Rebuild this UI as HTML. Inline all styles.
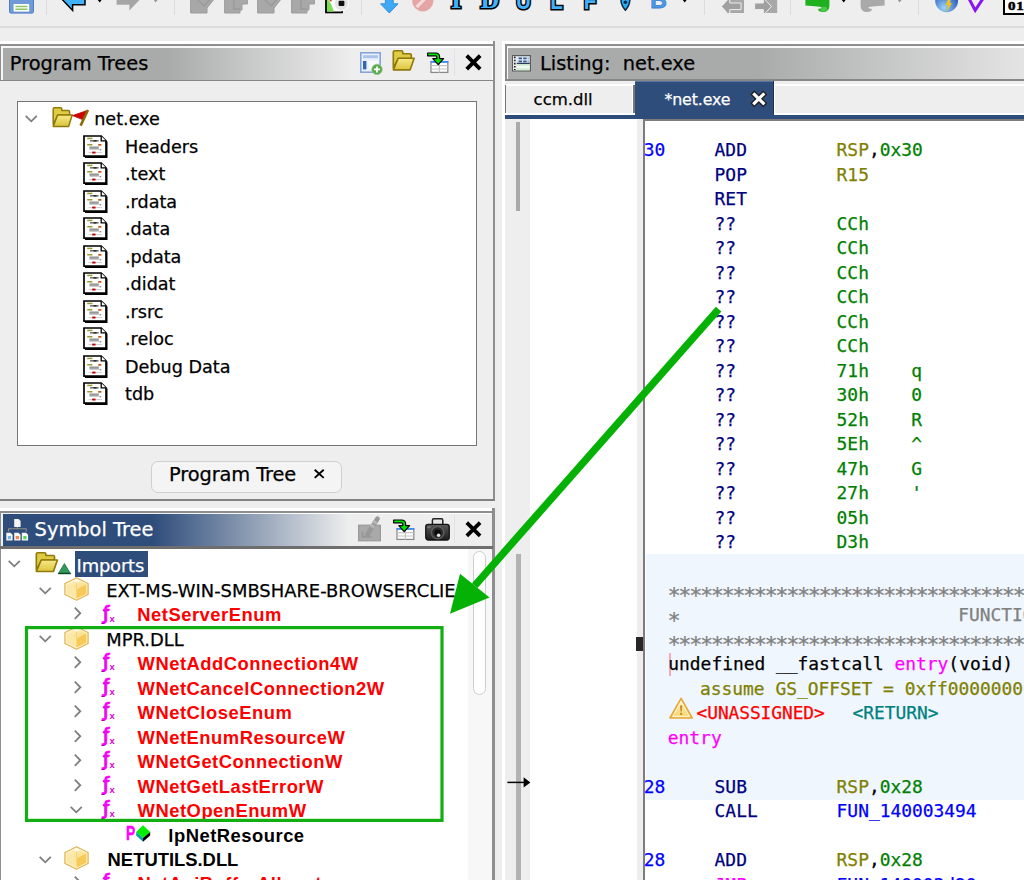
<!DOCTYPE html>
<html><head><meta charset="utf-8"><title>Ghidra</title>
<style>
html,body{margin:0;padding:0}
body{width:1024px;height:880px;overflow:hidden;background:#eeeeee;position:relative;opacity:.9999;font-family:"DejaVu Sans","Liberation Sans",sans-serif;color:#000}
.a{position:absolute}
.ui{font-family:"DejaVu Sans","Liberation Sans",sans-serif;white-space:pre;-webkit-text-stroke:.25px currentColor}
.b{font-family:"Liberation Sans","DejaVu Sans",sans-serif;font-weight:bold;white-space:pre}
.mono{font-family:"DejaVu Sans Mono","Liberation Mono",monospace;white-space:pre;-webkit-text-stroke:.25px}
svg{position:absolute;overflow:visible}
.t1{font-size:19.4px;line-height:34px;height:34px}
.pt{-webkit-text-stroke:.25px;position:absolute;left:125px;font-size:17.6px;line-height:28px;height:28px;white-space:pre}
.st{position:absolute;font-size:17.9px;line-height:25px;height:25px;white-space:pre}
.sb{position:absolute;font-size:18.4px;line-height:25px;height:25px;letter-spacing:.5px;color:#ff0000}
.ln{position:absolute;font-size:17.9px;line-height:24px;height:24px}
.cn{color:#000080}.cr{color:#808000}.cg{color:#008000}.cb{color:#0000ff}.cm{color:#ff00ff}.cs{color:#808080}.ct{color:#008080}.cx{color:#ff0000}
.g8{background:#8c8c8c}.w{background:#fff}
</style></head>
<body>
<svg width="0" height="0" style="left:0;top:0"><defs>
<linearGradient id="gfold" x1="0" y1="0" x2="0" y2="1"><stop offset="0" stop-color="#f7ea8a"/><stop offset="1" stop-color="#dcc53c"/></linearGradient>
<linearGradient id="gpk1" x1="0" y1="0" x2="1" y2="1"><stop offset="0" stop-color="#fff6cf"/><stop offset="1" stop-color="#f8d878"/></linearGradient>
<linearGradient id="gpk2" x1="0" y1="0" x2="0" y2="1"><stop offset="0" stop-color="#fbe59a"/><stop offset="1" stop-color="#f3c24e"/></linearGradient>
<linearGradient id="ggray" x1="0" y1="0" x2="0" y2="1"><stop offset="0" stop-color="#8a8a8a"/><stop offset="1" stop-color="#b8b8b8"/></linearGradient>
<linearGradient id="gcam" x1="0" y1="0" x2="0" y2="1"><stop offset="0" stop-color="#5a5a5a"/><stop offset="1" stop-color="#1c1c1c"/></linearGradient>
<linearGradient id="gwarn" x1="0" y1="0" x2="0" y2="1"><stop offset="0" stop-color="#fdf3c4"/><stop offset="1" stop-color="#f6d36a"/></linearGradient>
</defs></svg>
<div class="a" style="left:0;top:0;width:1024px;height:25px;overflow:hidden">
<div class="a" style="left:46px;top:0;width:1px;height:14.5px;background:#dcdcdc"></div><div class="a" style="left:174px;top:0;width:1px;height:14.5px;background:#dcdcdc"></div><div class="a" style="left:361px;top:0;width:1px;height:14.5px;background:#dcdcdc"></div><div class="a" style="left:704px;top:0;width:1px;height:14.5px;background:#dcdcdc"></div><div class="a" style="left:790px;top:0;width:1px;height:14.5px;background:#dcdcdc"></div><div class="a" style="left:918px;top:0;width:1px;height:14.5px;background:#dcdcdc"></div><svg style="left:9px;top:-11px" width="25" height="25"><rect x="0.5" y="0.5" width="24" height="23.6" rx="1.5" fill="#6e9ad8" stroke="#4f7cc4"/><rect x="4.6" y="15" width="15.6" height="7.6" fill="#fff"/><path d="M6.4,17.6 H18.4 M6.4,20.2 H18.4" stroke="#8cc860" stroke-width="1.5"/></svg><svg style="left:61px;top:-12px" width="25" height="23"><path d="M24,1 L24,16.8 L11.6,16.8 L11.6,22.4 L0.8,11 Z" fill="#3fb2fb" stroke="#000" stroke-width="1.5" stroke-linejoin="miter"/></svg><svg style="left:96.6px;top:-2.6px" width="6" height="6"><path d="M0,2 L5.4,2 L2.7,5.4 Z" fill="#000"/></svg><svg style="left:116px;top:-12px" width="25" height="23"><path d="M0.6,1 L0.6,16.8 L13.4,16.8 L13.4,22.4 L24.4,11 Z" fill="#a6a6a6"/></svg><svg style="left:153px;top:-2.6px" width="6" height="6"><path d="M0,2 L5.4,2 L2.7,5.4 Z" fill="#9a9a9a"/></svg><svg style="left:190.3px;top:-10px" width="24" height="24"><path d="M0.6,0 H23.4 V10 L17,18 V23 H0.6 Z" fill="#a8a8a8" stroke="#9c9c9c"/><path d="M6,8 L14,16 L23,6" fill="none" stroke="#9a9a9a" stroke-width="1.4"/></svg><svg style="left:223.6px;top:-10px" width="24" height="24"><path d="M0.6,0 H23.4 V14 H18 V20 H16 V23 H0.6 Z" fill="#a8a8a8" stroke="#9c9c9c"/><path d="M10,8 V19 H16" fill="none" stroke="#9a9a9a" stroke-width="1.4"/></svg><svg style="left:257px;top:-10px" width="24" height="24"><path d="M0.6,0 H23.4 V10 L17,18 V23 H0.6 Z" fill="#a8a8a8" stroke="#9c9c9c"/><path d="M6,8 L14,16 L23,6" fill="none" stroke="#9a9a9a" stroke-width="1.4"/></svg><svg style="left:290.8px;top:-10px" width="24" height="24"><path d="M0.6,0 H23.4 V14 H18 V20 H16 V23 H0.6 Z" fill="#a8a8a8" stroke="#9c9c9c"/><path d="M10,8 V19 H16" fill="none" stroke="#9a9a9a" stroke-width="1.4"/></svg><svg style="left:324.7px;top:-10px" width="24" height="24"><rect x="1" y="0" width="16" height="22.4" fill="#fff" stroke="#000" stroke-width="1.8"/><path d="M2,21.4 L2,8 L6,14 L9,21.4 Z" fill="#78e050"/><rect x="4.6" y="9" width="2" height="2.4" fill="#c04010"/><circle cx="16.4" cy="13.4" r="7.2" fill="#e4e4e4" stroke="#f8f8f8" stroke-width="1.4"/><rect x="13.6" y="10.8" width="5.8" height="5.2" rx="1" fill="#111"/></svg><svg style="left:379.5px;top:-10px" width="19" height="24"><path d="M5.4,0 H13.2 V13.8 H18 L9.3,23 L0.6,13.8 H5.4 Z" fill="#3fa9f5" stroke="#2d8fde" stroke-width="1"/></svg><svg style="left:411.8px;top:-10px" width="22" height="22"><circle cx="10.8" cy="10.8" r="10.6" fill="#e6a5a5"/><path d="M4.6,17 L17,4.6" stroke="#f4dada" stroke-width="3.2"/></svg><div class="a" style="left:446px;top:-14.8px;width:20px;text-align:center;font-family:'Liberation Serif',serif;font-weight:bold;font-size:26px;line-height:30px;color:#3fb2fb;-webkit-text-stroke:3.2px #000;paint-order:stroke fill">I</div><div class="a" style="left:478px;top:-14.8px;width:24px;text-align:center;font-family:'Liberation Serif',serif;font-weight:bold;font-size:26px;line-height:30px;color:#3fb2fb;-webkit-text-stroke:3.2px #000;paint-order:stroke fill">D</div><div class="a" style="left:512px;top:-13.9px;width:23px;text-align:center;font-family:'Liberation Sans',sans-serif;font-weight:bold;font-size:24px;line-height:30px;color:#3fb2fb;-webkit-text-stroke:3.2px #000;paint-order:stroke fill;transform:scaleX(.86)">U</div><div class="a" style="left:546px;top:-13.9px;width:21px;text-align:center;font-family:'Liberation Sans',sans-serif;font-weight:bold;font-size:24px;line-height:30px;color:#3fb2fb;-webkit-text-stroke:3.2px #000;paint-order:stroke fill;transform:scaleX(.86)">L</div><div class="a" style="left:580px;top:-13.9px;width:20px;text-align:center;font-family:'Liberation Sans',sans-serif;font-weight:bold;font-size:24px;line-height:30px;color:#3fb2fb;-webkit-text-stroke:3.2px #000;paint-order:stroke fill;transform:scaleX(.86)">F</div><svg style="left:619.6px;top:0px" width="11" height="12"><path d="M0.9,-2 Q0.6,5 5.4,10.2 Q10.2,5 9.9,-2 Z" fill="#28aef4" stroke="#0a2a48" stroke-width="1.5"/><circle cx="5.4" cy="2.2" r="1.8" fill="#0a2a48"/></svg><div class="a" style="left:648px;top:-15.5px;width:21px;text-align:center;font-family:'Liberation Sans',sans-serif;font-weight:bold;font-size:23px;line-height:30px;color:#4a9ae8;-webkit-text-stroke:.8px #3a80d0">B</div><svg style="left:681.6px;top:-2.6px" width="6" height="6"><path d="M0,2 L5.4,2 L2.7,5.4 Z" fill="#000"/></svg><svg style="left:720.7px;top:-10px" width="24" height="24"><rect x="9" y="0" width="14" height="23" fill="#a8a8a8"/><path d="M0.4,16.4 L8.8,7.4 L8.8,13 L20,13 L20,19.6 L8.8,19.6 L8.8,23.4 L6.6,23.4 Z" fill="#a0a0a0" stroke="#eee" stroke-width="1"/></svg><svg style="left:754.4px;top:-10px" width="24" height="24"><rect x="9.4" y="0" width="13.8" height="23" fill="#a8a8a8"/><path d="M0.6,13 L9.4,13 L9.4,8 L17.4,16.4 L11,23.4 L9.4,23.4 L9.4,19.6 L0.6,19.6 Z" fill="#a0a0a0" stroke="#eee" stroke-width="1"/></svg><svg style="left:805px;top:0px" width="25" height="13"><path d="M0.4,0 H24.4 V5.4 Q24.6,12.4 17,12 Q12,11.4 13.6,8.6 Q16.4,9.4 16.6,7 L9.6,6.2 L0.4,5.4 Z" fill="#1fb01f"/><path d="M17,7 Q23,6 22,10 Q19,12.4 15,11" fill="#66dd66" opacity=".6"/></svg><svg style="left:840.6px;top:-2.6px" width="6" height="6"><path d="M0,2 L5.4,2 L2.7,5.4 Z" fill="#000"/></svg><svg style="left:860px;top:0px" width="25" height="13"><path d="M24.6,0 H0.6 V5.4 Q0.4,12.4 8,12 Q13,11.4 11.4,8.6 Q8.6,9.4 8.4,7 L15.4,6.2 L24.6,5.4 Z" fill="#a9a9a9"/></svg><svg style="left:897px;top:-2.6px" width="6" height="6"><path d="M0,2 L5.4,2 L2.7,5.4 Z" fill="#9a9a9a"/></svg><svg style="left:934.8px;top:-11px" width="24" height="24"><defs><radialGradient id="gglobe" cx=".4" cy=".8" r=".7"><stop offset="0" stop-color="#9fd4f8"/><stop offset="1" stop-color="#1f55b8"/></radialGradient></defs><circle cx="11.6" cy="11.8" r="11.4" fill="url(#gglobe)"/><path d="M14,8 L16.6,8 L14.8,14 L17,14 L11.6,23 L12.8,16 L10.6,16 Z" fill="#f2c21c"/></svg><svg style="left:968.3px;top:-10px" width="20" height="22"><path d="M1,8.6 L7.2,20.4 L18,4" fill="none" stroke="#8a14f0" stroke-width="3"/></svg><div class="a" style="left:1003px;top:-8px;width:30px;height:19px;background:#fff;border:2px solid #000"></div><div class="a" style="left:1007.6px;top:-0.4px;font-family:'Liberation Serif',serif;font-weight:bold;font-size:12px;line-height:12px;letter-spacing:.6px;color:#000;-webkit-text-stroke:.5px #000;transform:scaleX(1.25);transform-origin:0 0">01</div>
</div>
<div class="a" style="left:0;top:26px;width:1024px;height:1.5px;background:#dcdcdc"></div>
<div class="a w" style="left:0;top:41px;width:493px;height:3px"></div>
<div class="a" style="left:0;top:44px;width:495px;height:2px;background:#8e8e8e"></div>
<div class="a" style="left:493px;top:41px;width:2px;height:460px;background:#8e8e8e"></div>
<div class="a w" style="left:491.5px;top:46px;width:1.5px;height:34px"></div>
<div class="a" style="left:0;top:498.8px;width:495px;height:2px;background:#808080"></div>
<div class="a" style="left:0;top:46px;width:1.3px;height:34px;background:#8e8e8e"></div>
<div class="a" style="left:1.3px;top:46px;width:490.2px;height:34px;background:linear-gradient(90deg,#a9abaa 0,#a9abaa 34%,#eeeeee 72%)"></div>
<div class="a w" style="left:1.3px;top:46px;width:490.2px;height:1.7px;opacity:.9"></div>
<div class="a w" style="left:1.3px;top:46px;width:1.7px;height:34px;opacity:.9"></div>
<div class="a" style="left:0;top:79.6px;width:493px;height:1.4px;background:#868686"></div>
<div class="a ui t1" style="left:9.8px;top:46.5px">Program Trees</div>
<svg style="left:360px;top:52px" width="22.5" height="22.75" viewBox="0 0 22.5 22.75"> <rect x="0.8" y="0.8" width="19.4" height="19.4" fill="#eaf1fb" stroke="#7f9fd6" stroke-width="1.5"/>
 <rect x="3" y="3.2" width="15" height="3" fill="#a9c3ea"/>
 <rect x="3" y="9" width="3.4" height="8.4" fill="#3566b0"/>
 <rect x="8.4" y="9" width="9.6" height="8.4" fill="#f8fafe"/>
 <circle cx="17" cy="17.4" r="5.2" fill="#5aa84c" stroke="#8cc880" stroke-width="0.8"/>
 <path d="M14,17.4 H20 M17,14.4 V20.4" stroke="#fff" stroke-width="1.8"/></svg>

<svg style="left:392px;top:50px" width="23" height="21" viewBox="0 0 21 20.5" preserveAspectRatio="none"> <path d="M1.2,17.5 L1.2,2 Q1.2,0.8 2.4,0.8 L8.6,0.8 Q9.8,0.8 9.8,2 L9.8,3.6 L16.4,3.6 Q17.6,3.6 17.6,4.8 L17.6,8.2 L6,8.2 Z" fill="#e0cb45" stroke="#8f7a0a" stroke-width="1.5" stroke-linejoin="round"/>
 <path d="M5.6,8 L20.2,8 L16.6,19.4 L1.2,19.4 Z" fill="url(#gfold)" stroke="#8f7a0a" stroke-width="1.5" stroke-linejoin="round"/></svg>

<svg style="left:427px;top:52.3px" width="21.5" height="21" viewBox="0 0 21.5 21"> <rect x="4" y="10" width="16.8" height="10.4" fill="#fff" stroke="#8a8a8a" stroke-width="1.3"/>
 <path d="M4,13.6 H20.8 M4,17 H20.8 M12.4,12 V20.4" stroke="#c4c4c4" stroke-width="1.2" fill="none"/>
 <rect x="3.4" y="9" width="18" height="1.7" fill="#3a8cff"/>
 <path d="M0.6,1 L8.6,1 Q12.6,1 12.6,5 L12.6,6.6 L16.6,6.6 L11.2,12.6 L5.8,6.6 L9.8,6.6 L9.8,5 Q9.8,3.8 8.6,3.8 L0.6,3.8 Z" fill="#00e400" stroke="#000" stroke-width="1.2" stroke-linejoin="round"/></svg>

<div class="a" style="left:454.3px;top:49px;width:1px;height:27px;background:#e2e2e2"></div>
<svg style="left:465.4px;top:53.8px" width="16.9" height="16.8" viewBox="0 0 16 16"> <path d="M1.6,1.6 L14.4,14.4 M14.4,1.6 L1.6,14.4" stroke="#000" stroke-width="3.6" stroke-linecap="butt"/></svg>

<div class="a" style="left:17px;top:101px;width:457.5px;height:343px;background:#fff;border:1.4px solid #767676"></div>
<svg style="left:25px;top:115px" width="12.5" height="7.5"><path d="M0.7,0.8 L6.25,6.3 L11.8,0.8" fill="none" stroke="#7f7f7f" stroke-width="1.8"/></svg>

<svg style="left:52px;top:107px" width="21" height="20.5" viewBox="0 0 21 20.5" preserveAspectRatio="none"> <path d="M1.2,17.5 L1.2,2 Q1.2,0.8 2.4,0.8 L8.6,0.8 Q9.8,0.8 9.8,2 L9.8,3.6 L16.4,3.6 Q17.6,3.6 17.6,4.8 L17.6,8.2 L6,8.2 Z" fill="#e0cb45" stroke="#8f7a0a" stroke-width="1.5" stroke-linejoin="round"/>
 <path d="M5.6,8 L20.2,8 L16.6,19.4 L1.2,19.4 Z" fill="url(#gfold)" stroke="#8f7a0a" stroke-width="1.5" stroke-linejoin="round"/></svg>

<svg style="left:70px;top:108px" width="20" height="20"><path d="M17.4,2.4 L2.6,7.6 L12.6,11.6 Z" fill="#d40000" stroke="#b00000" stroke-width=".8" stroke-linejoin="round"/><path d="M18,2 L10.6,17.6" stroke="#8a6a08" stroke-width="2.6"/></svg>
<div class="pt" style="left:94.2px;top:105.20px">net.exe</div>
<svg style="left:82.7px;top:134.7px" width="24.5" height="23" viewBox="0 0 24.5 23"> <path d="M2,22.2 L23.8,22.2 L23.8,6.5" fill="none" stroke="#000" stroke-width="1.4"/>
 <path d="M1,1 L18.2,1 L23,5.8 L23,21.2 L1,21.2 Z" fill="#fff" stroke="#000" stroke-width="1.7" stroke-linejoin="miter"/>
 <path d="M18.2,1 L18.2,5.8 L23,5.8" fill="#fff" stroke="#000" stroke-width="1.3"/>
 <rect x="4.2" y="2.7" width="5.2" height="1.5" fill="#9a9a3a"/>
 <rect x="7" y="5" width="8.6" height="1.6" fill="#777"/>
 <rect x="10.5" y="5" width="3" height="1.6" fill="#333"/>
 <rect x="4.2" y="9" width="5.2" height="1.5" fill="#9a9a3a"/>
 <rect x="15.2" y="9" width="3.2" height="1.7" fill="#c05a10"/>
 <rect x="6.4" y="11.5" width="9.4" height="3.2" fill="url(#ggray)"/>
 <rect x="16.6" y="14" width="1.6" height="1.4" fill="#888"/>
 <rect x="5.6" y="17.1" width="13.4" height="1" fill="#ccc"/>
 <rect x="9.2" y="16.6" width="3.3" height="1.9" fill="#c40000"/></svg>

<div class="pt" style="top:132.70px">Headers</div>
<svg style="left:82.7px;top:162.2px" width="24.5" height="23" viewBox="0 0 24.5 23"> <path d="M2,22.2 L23.8,22.2 L23.8,6.5" fill="none" stroke="#000" stroke-width="1.4"/>
 <path d="M1,1 L18.2,1 L23,5.8 L23,21.2 L1,21.2 Z" fill="#fff" stroke="#000" stroke-width="1.7" stroke-linejoin="miter"/>
 <path d="M18.2,1 L18.2,5.8 L23,5.8" fill="#fff" stroke="#000" stroke-width="1.3"/>
 <rect x="4.2" y="2.7" width="5.2" height="1.5" fill="#9a9a3a"/>
 <rect x="7" y="5" width="8.6" height="1.6" fill="#777"/>
 <rect x="10.5" y="5" width="3" height="1.6" fill="#333"/>
 <rect x="4.2" y="9" width="5.2" height="1.5" fill="#9a9a3a"/>
 <rect x="15.2" y="9" width="3.2" height="1.7" fill="#c05a10"/>
 <rect x="6.4" y="11.5" width="9.4" height="3.2" fill="url(#ggray)"/>
 <rect x="16.6" y="14" width="1.6" height="1.4" fill="#888"/>
 <rect x="5.6" y="17.1" width="13.4" height="1" fill="#ccc"/>
 <rect x="9.2" y="16.6" width="3.3" height="1.9" fill="#c40000"/></svg>

<div class="pt" style="top:160.20px">.text</div>
<svg style="left:82.7px;top:189.7px" width="24.5" height="23" viewBox="0 0 24.5 23"> <path d="M2,22.2 L23.8,22.2 L23.8,6.5" fill="none" stroke="#000" stroke-width="1.4"/>
 <path d="M1,1 L18.2,1 L23,5.8 L23,21.2 L1,21.2 Z" fill="#fff" stroke="#000" stroke-width="1.7" stroke-linejoin="miter"/>
 <path d="M18.2,1 L18.2,5.8 L23,5.8" fill="#fff" stroke="#000" stroke-width="1.3"/>
 <rect x="4.2" y="2.7" width="5.2" height="1.5" fill="#9a9a3a"/>
 <rect x="7" y="5" width="8.6" height="1.6" fill="#777"/>
 <rect x="10.5" y="5" width="3" height="1.6" fill="#333"/>
 <rect x="4.2" y="9" width="5.2" height="1.5" fill="#9a9a3a"/>
 <rect x="15.2" y="9" width="3.2" height="1.7" fill="#c05a10"/>
 <rect x="6.4" y="11.5" width="9.4" height="3.2" fill="url(#ggray)"/>
 <rect x="16.6" y="14" width="1.6" height="1.4" fill="#888"/>
 <rect x="5.6" y="17.1" width="13.4" height="1" fill="#ccc"/>
 <rect x="9.2" y="16.6" width="3.3" height="1.9" fill="#c40000"/></svg>

<div class="pt" style="top:187.70px">.rdata</div>
<svg style="left:82.7px;top:217.2px" width="24.5" height="23" viewBox="0 0 24.5 23"> <path d="M2,22.2 L23.8,22.2 L23.8,6.5" fill="none" stroke="#000" stroke-width="1.4"/>
 <path d="M1,1 L18.2,1 L23,5.8 L23,21.2 L1,21.2 Z" fill="#fff" stroke="#000" stroke-width="1.7" stroke-linejoin="miter"/>
 <path d="M18.2,1 L18.2,5.8 L23,5.8" fill="#fff" stroke="#000" stroke-width="1.3"/>
 <rect x="4.2" y="2.7" width="5.2" height="1.5" fill="#9a9a3a"/>
 <rect x="7" y="5" width="8.6" height="1.6" fill="#777"/>
 <rect x="10.5" y="5" width="3" height="1.6" fill="#333"/>
 <rect x="4.2" y="9" width="5.2" height="1.5" fill="#9a9a3a"/>
 <rect x="15.2" y="9" width="3.2" height="1.7" fill="#c05a10"/>
 <rect x="6.4" y="11.5" width="9.4" height="3.2" fill="url(#ggray)"/>
 <rect x="16.6" y="14" width="1.6" height="1.4" fill="#888"/>
 <rect x="5.6" y="17.1" width="13.4" height="1" fill="#ccc"/>
 <rect x="9.2" y="16.6" width="3.3" height="1.9" fill="#c40000"/></svg>

<div class="pt" style="top:215.20px">.data</div>
<svg style="left:82.7px;top:244.7px" width="24.5" height="23" viewBox="0 0 24.5 23"> <path d="M2,22.2 L23.8,22.2 L23.8,6.5" fill="none" stroke="#000" stroke-width="1.4"/>
 <path d="M1,1 L18.2,1 L23,5.8 L23,21.2 L1,21.2 Z" fill="#fff" stroke="#000" stroke-width="1.7" stroke-linejoin="miter"/>
 <path d="M18.2,1 L18.2,5.8 L23,5.8" fill="#fff" stroke="#000" stroke-width="1.3"/>
 <rect x="4.2" y="2.7" width="5.2" height="1.5" fill="#9a9a3a"/>
 <rect x="7" y="5" width="8.6" height="1.6" fill="#777"/>
 <rect x="10.5" y="5" width="3" height="1.6" fill="#333"/>
 <rect x="4.2" y="9" width="5.2" height="1.5" fill="#9a9a3a"/>
 <rect x="15.2" y="9" width="3.2" height="1.7" fill="#c05a10"/>
 <rect x="6.4" y="11.5" width="9.4" height="3.2" fill="url(#ggray)"/>
 <rect x="16.6" y="14" width="1.6" height="1.4" fill="#888"/>
 <rect x="5.6" y="17.1" width="13.4" height="1" fill="#ccc"/>
 <rect x="9.2" y="16.6" width="3.3" height="1.9" fill="#c40000"/></svg>

<div class="pt" style="top:242.70px">.pdata</div>
<svg style="left:82.7px;top:272.2px" width="24.5" height="23" viewBox="0 0 24.5 23"> <path d="M2,22.2 L23.8,22.2 L23.8,6.5" fill="none" stroke="#000" stroke-width="1.4"/>
 <path d="M1,1 L18.2,1 L23,5.8 L23,21.2 L1,21.2 Z" fill="#fff" stroke="#000" stroke-width="1.7" stroke-linejoin="miter"/>
 <path d="M18.2,1 L18.2,5.8 L23,5.8" fill="#fff" stroke="#000" stroke-width="1.3"/>
 <rect x="4.2" y="2.7" width="5.2" height="1.5" fill="#9a9a3a"/>
 <rect x="7" y="5" width="8.6" height="1.6" fill="#777"/>
 <rect x="10.5" y="5" width="3" height="1.6" fill="#333"/>
 <rect x="4.2" y="9" width="5.2" height="1.5" fill="#9a9a3a"/>
 <rect x="15.2" y="9" width="3.2" height="1.7" fill="#c05a10"/>
 <rect x="6.4" y="11.5" width="9.4" height="3.2" fill="url(#ggray)"/>
 <rect x="16.6" y="14" width="1.6" height="1.4" fill="#888"/>
 <rect x="5.6" y="17.1" width="13.4" height="1" fill="#ccc"/>
 <rect x="9.2" y="16.6" width="3.3" height="1.9" fill="#c40000"/></svg>

<div class="pt" style="top:270.20px">.didat</div>
<svg style="left:82.7px;top:299.7px" width="24.5" height="23" viewBox="0 0 24.5 23"> <path d="M2,22.2 L23.8,22.2 L23.8,6.5" fill="none" stroke="#000" stroke-width="1.4"/>
 <path d="M1,1 L18.2,1 L23,5.8 L23,21.2 L1,21.2 Z" fill="#fff" stroke="#000" stroke-width="1.7" stroke-linejoin="miter"/>
 <path d="M18.2,1 L18.2,5.8 L23,5.8" fill="#fff" stroke="#000" stroke-width="1.3"/>
 <rect x="4.2" y="2.7" width="5.2" height="1.5" fill="#9a9a3a"/>
 <rect x="7" y="5" width="8.6" height="1.6" fill="#777"/>
 <rect x="10.5" y="5" width="3" height="1.6" fill="#333"/>
 <rect x="4.2" y="9" width="5.2" height="1.5" fill="#9a9a3a"/>
 <rect x="15.2" y="9" width="3.2" height="1.7" fill="#c05a10"/>
 <rect x="6.4" y="11.5" width="9.4" height="3.2" fill="url(#ggray)"/>
 <rect x="16.6" y="14" width="1.6" height="1.4" fill="#888"/>
 <rect x="5.6" y="17.1" width="13.4" height="1" fill="#ccc"/>
 <rect x="9.2" y="16.6" width="3.3" height="1.9" fill="#c40000"/></svg>

<div class="pt" style="top:297.70px">.rsrc</div>
<svg style="left:82.7px;top:327.2px" width="24.5" height="23" viewBox="0 0 24.5 23"> <path d="M2,22.2 L23.8,22.2 L23.8,6.5" fill="none" stroke="#000" stroke-width="1.4"/>
 <path d="M1,1 L18.2,1 L23,5.8 L23,21.2 L1,21.2 Z" fill="#fff" stroke="#000" stroke-width="1.7" stroke-linejoin="miter"/>
 <path d="M18.2,1 L18.2,5.8 L23,5.8" fill="#fff" stroke="#000" stroke-width="1.3"/>
 <rect x="4.2" y="2.7" width="5.2" height="1.5" fill="#9a9a3a"/>
 <rect x="7" y="5" width="8.6" height="1.6" fill="#777"/>
 <rect x="10.5" y="5" width="3" height="1.6" fill="#333"/>
 <rect x="4.2" y="9" width="5.2" height="1.5" fill="#9a9a3a"/>
 <rect x="15.2" y="9" width="3.2" height="1.7" fill="#c05a10"/>
 <rect x="6.4" y="11.5" width="9.4" height="3.2" fill="url(#ggray)"/>
 <rect x="16.6" y="14" width="1.6" height="1.4" fill="#888"/>
 <rect x="5.6" y="17.1" width="13.4" height="1" fill="#ccc"/>
 <rect x="9.2" y="16.6" width="3.3" height="1.9" fill="#c40000"/></svg>

<div class="pt" style="top:325.20px">.reloc</div>
<svg style="left:82.7px;top:354.7px" width="24.5" height="23" viewBox="0 0 24.5 23"> <path d="M2,22.2 L23.8,22.2 L23.8,6.5" fill="none" stroke="#000" stroke-width="1.4"/>
 <path d="M1,1 L18.2,1 L23,5.8 L23,21.2 L1,21.2 Z" fill="#fff" stroke="#000" stroke-width="1.7" stroke-linejoin="miter"/>
 <path d="M18.2,1 L18.2,5.8 L23,5.8" fill="#fff" stroke="#000" stroke-width="1.3"/>
 <rect x="4.2" y="2.7" width="5.2" height="1.5" fill="#9a9a3a"/>
 <rect x="7" y="5" width="8.6" height="1.6" fill="#777"/>
 <rect x="10.5" y="5" width="3" height="1.6" fill="#333"/>
 <rect x="4.2" y="9" width="5.2" height="1.5" fill="#9a9a3a"/>
 <rect x="15.2" y="9" width="3.2" height="1.7" fill="#c05a10"/>
 <rect x="6.4" y="11.5" width="9.4" height="3.2" fill="url(#ggray)"/>
 <rect x="16.6" y="14" width="1.6" height="1.4" fill="#888"/>
 <rect x="5.6" y="17.1" width="13.4" height="1" fill="#ccc"/>
 <rect x="9.2" y="16.6" width="3.3" height="1.9" fill="#c40000"/></svg>

<div class="pt" style="top:352.70px">Debug Data</div>
<svg style="left:82.7px;top:382.2px" width="24.5" height="23" viewBox="0 0 24.5 23"> <path d="M2,22.2 L23.8,22.2 L23.8,6.5" fill="none" stroke="#000" stroke-width="1.4"/>
 <path d="M1,1 L18.2,1 L23,5.8 L23,21.2 L1,21.2 Z" fill="#fff" stroke="#000" stroke-width="1.7" stroke-linejoin="miter"/>
 <path d="M18.2,1 L18.2,5.8 L23,5.8" fill="#fff" stroke="#000" stroke-width="1.3"/>
 <rect x="4.2" y="2.7" width="5.2" height="1.5" fill="#9a9a3a"/>
 <rect x="7" y="5" width="8.6" height="1.6" fill="#777"/>
 <rect x="10.5" y="5" width="3" height="1.6" fill="#333"/>
 <rect x="4.2" y="9" width="5.2" height="1.5" fill="#9a9a3a"/>
 <rect x="15.2" y="9" width="3.2" height="1.7" fill="#c05a10"/>
 <rect x="6.4" y="11.5" width="9.4" height="3.2" fill="url(#ggray)"/>
 <rect x="16.6" y="14" width="1.6" height="1.4" fill="#888"/>
 <rect x="5.6" y="17.1" width="13.4" height="1" fill="#ccc"/>
 <rect x="9.2" y="16.6" width="3.3" height="1.9" fill="#c40000"/></svg>

<div class="pt" style="top:380.20px">tdb</div>
<div class="a" style="left:151px;top:460.5px;width:189px;height:30.5px;border:1px solid #cfcfcf;border-radius:7px;background:#f4f4f4"></div>
<div class="a ui" style="left:169px;top:458.3px;font-size:19.4px;letter-spacing:-.1px;line-height:34px">Program Tree</div>
<svg style="left:313.7px;top:469.4px" width="10.4" height="9.6"><path d="M0.7,0.7 L9.7,8.9 M9.7,0.7 L0.7,8.9" stroke="#000" stroke-width="1.9"/></svg>
<div class="a w" style="left:0;top:508px;width:493px;height:3.2px"></div>
<div class="a w" style="left:1.3px;top:548px;width:490.7px;height:332px"></div>
<div class="a" style="left:467.5px;top:549px;width:24px;height:331px;background:#f7f7f7"></div>
<div class="a" style="left:0;top:511.2px;width:495px;height:1.9px;background:#8e8e8e"></div>
<div class="a" style="left:492px;top:508px;width:2.6px;height:372px;background:#8e8e8e"></div>
<div class="a" style="left:0;top:513px;width:1.3px;height:367px;background:#8e8e8e"></div>
<div class="a" style="left:1.3px;top:513px;width:490.2px;height:33.4px;background:linear-gradient(90deg,#2e4d7b 0,#2e4d7b 31%,#eeeeee 71%)"></div>
<div class="a w" style="left:1.3px;top:513px;width:490.2px;height:1.3px;opacity:.92"></div>
<div class="a w" style="left:1.3px;top:513px;width:1.6px;height:33.4px;opacity:.92"></div>
<div class="a" style="left:0;top:546.3px;width:493px;height:2.5px;background:#6e6e6e"></div>
<svg style="left:5.6px;top:518.8px" width="22.4" height="21.4" viewBox="0 0 22.4 21.4"> <path d="M8.2,0 L12.6,0 L14.6,2 L14.6,8 L8.2,8 Z" fill="#f4f4f4"/>
 <path d="M11.4,8 V9.8 M2.6,12.4 V9.8 H20.2 V12.4" fill="none" stroke="#8f8f86" stroke-width="1.1"/>
 <path d="M0.3,13.8 L4.6,13.8 L6.6,15.8 L6.6,21.4 L0.3,21.4 Z" fill="#f6f6f6"/>
 <path d="M8.2,13.8 L12.5,13.8 L14.5,15.8 L14.5,21.4 L8.2,21.4 Z" fill="#f6f6f6"/>
 <path d="M15.8,13.8 L20.1,13.8 L22.1,15.8 L22.1,21.4 L15.8,21.4 Z" fill="#f6f6f6"/>
 <rect x="1.8" y="17" width="3.2" height="3.2" fill="#74b6f2"/>
 <rect x="9.7" y="17" width="3.2" height="3.2" fill="#f2854a"/>
 <rect x="17.3" y="17" width="3.2" height="3.2" fill="#58d458"/></svg>

<div class="a ui t1" style="left:34.6px;top:512.8px;color:#fff">Symbol Tree</div>
<svg style="left:358px;top:517px" width="23" height="24.4" viewBox="0 0 23 24.4"> <rect x="0.6" y="8.2" width="21.8" height="15.6" fill="#a9a9a9" stroke="#9a9a9a" stroke-width="1.2"/>
 <path d="M19.6,1.6 L9.4,17.6" stroke="#989898" stroke-width="4.6" stroke-linecap="round"/>
 <path d="M17.6,4 L16,6.4 M15.2,7.8 L13.6,10.2" stroke="#b8b8b8" stroke-width="4.4"/>
 <path d="M4.4,14.6 L4.4,19.6 L12,19.6 L9,17.6" stroke="#969696" stroke-width="1.6" fill="none"/></svg>

<svg style="left:393.2px;top:518.5px" width="21.5" height="21" viewBox="0 0 21.5 21"> <rect x="4" y="10" width="16.8" height="10.4" fill="#fff" stroke="#8a8a8a" stroke-width="1.3"/>
 <path d="M4,13.6 H20.8 M4,17 H20.8 M12.4,12 V20.4" stroke="#c4c4c4" stroke-width="1.2" fill="none"/>
 <rect x="3.4" y="9" width="18" height="1.7" fill="#3a8cff"/>
 <path d="M0.6,1 L8.6,1 Q12.6,1 12.6,5 L12.6,6.6 L16.6,6.6 L11.2,12.6 L5.8,6.6 L9.8,6.6 L9.8,5 Q9.8,3.8 8.6,3.8 L0.6,3.8 Z" fill="#00e400" stroke="#000" stroke-width="1.2" stroke-linejoin="round"/></svg>

<svg style="left:425.4px;top:517.5px" width="25" height="23.5" viewBox="0 0 25 23.5"> <rect x="7.4" y="0.8" width="10.4" height="7" rx="1.4" fill="#e4e4e4" stroke="#222" stroke-width="1.5"/>
 <rect x="0.8" y="6.4" width="23.4" height="15.6" rx="2.4" fill="url(#gcam)" stroke="#141414" stroke-width="1.4"/>
 <circle cx="12.6" cy="14.6" r="6.2" fill="#2a2a2a" stroke="#5c5c5c" stroke-width="1.6"/>
 <circle cx="12.6" cy="14.6" r="3.2" fill="#0a0a0a"/>
 <circle cx="13.6" cy="17.2" r="1.7" fill="#e8e8e8"/>
 <rect x="2.4" y="8.4" width="3.2" height="1.8" fill="#777"/></svg>

<div class="a" style="left:454.3px;top:515px;width:1px;height:28px;background:#e2e2e2"></div>
<svg style="left:465.4px;top:520.5px" width="16.9" height="16.6" viewBox="0 0 16 16"> <path d="M1.6,1.6 L14.4,14.4 M14.4,1.6 L1.6,14.4" stroke="#000" stroke-width="3.6" stroke-linecap="butt"/></svg>

<div class="a" style="left:472.5px;top:551px;width:11px;height:141.5px;border:1px solid #cdcdcd;border-radius:7px;background:#fff"></div>
<svg style="left:8px;top:560.4px" width="12.5" height="7.5"><path d="M0.7,0.8 L6.25,6.3 L11.8,0.8" fill="none" stroke="#7f7f7f" stroke-width="1.8"/></svg>

<svg style="left:35px;top:552.4px" width="23.3" height="20.6" viewBox="0 0 21 20.5" preserveAspectRatio="none"> <path d="M1.2,17.5 L1.2,2 Q1.2,0.8 2.4,0.8 L8.6,0.8 Q9.8,0.8 9.8,2 L9.8,3.6 L16.4,3.6 Q17.6,3.6 17.6,4.8 L17.6,8.2 L6,8.2 Z" fill="#e0cb45" stroke="#8f7a0a" stroke-width="1.5" stroke-linejoin="round"/>
 <path d="M5.6,8 L20.2,8 L16.6,19.4 L1.2,19.4 Z" fill="url(#gfold)" stroke="#8f7a0a" stroke-width="1.5" stroke-linejoin="round"/></svg>

<svg style="left:57.8px;top:562.6px" width="13" height="11.4"><path d="M6.4,0.6 L12.6,10.8 L0.3,10.8 Z" fill="#2f9a5c" stroke="#1e7040" stroke-width=".8" stroke-linejoin="round"/><path d="M0.3,10.4 H12.6" stroke="#0c4020" stroke-width="1.2"/></svg>
<div class="a" style="left:75px;top:551px;width:73px;height:26px;background:#2e4d7b"></div>
<div class="st ui" style="left:76.5px;top:552.60px;color:#fff;letter-spacing:-.15px">Imports</div>
<svg style="left:39px;top:586.5500000000001px" width="12.5" height="7.5"><path d="M0.7,0.8 L6.25,6.3 L11.8,0.8" fill="none" stroke="#7f7f7f" stroke-width="1.8"/></svg>

<svg style="left:64.2px;top:577.35px" width="25" height="24" viewBox="0 0 25 24" preserveAspectRatio="none"> <path d="M12.5,0.9 L24,6.6 L24,17.4 L12.5,23.1 L1,17.4 L1,6.6 Z" fill="#fbe7a6" stroke="#e3b960" stroke-width="1.5" stroke-linejoin="round"/>
 <path d="M12.5,12.2 L23.2,7 L23.2,17 L12.5,22.2 Z" fill="#f7c956"/>
 <path d="M12.5,2 L22.6,6.8 L12.5,11.8 L2.4,6.8 Z" fill="url(#gpk1)"/>
 <path d="M8.6,3.6 L12.5,5.6 L16.6,3.8 L12.5,2 Z" fill="#fffdf0"/>
 <path d="M12.5,5.6 L12.5,11.8" stroke="#f3d184" stroke-width="1"/>
 <path d="M12.5,2.2 L22.8,7 L22.8,16.9 L12.5,22 L2.2,16.9 L2.2,7 Z" fill="none" stroke="#fff6d8" stroke-width=".9" opacity=".9"/></svg>

<div class="st ui" style="left:106.3px;top:578.00px;">EXT-MS-WIN-SMBSHARE-BROWSERCLIE</div>
<svg style="left:73.5px;top:607.4px" width="7.5" height="12.5"><path d="M0.8,0.7 L6.3,6.25 L0.8,11.8" fill="none" stroke="#7f7f7f" stroke-width="1.8"/></svg>

<div class="a" style="left:103.2px;top:600.50px;font-family:'DejaVu Sans',sans-serif;font-weight:normal;font-size:17.8px;line-height:24px;color:#ff00ff;-webkit-text-stroke:.7px #ff00ff;text-shadow:-0.8px 0.8px 0 #8a008a">ƒ</div>
<div class="a" style="left:109.4px;top:613.50px;font-family:'Liberation Sans',sans-serif;font-weight:bold;font-size:9.5px;line-height:10px;color:#d800d8">x</div>
<div class="sb b" style="left:137.3px;top:602.45px;">NetServerEnum</div>
<svg style="left:39px;top:635.45px" width="12.5" height="7.5"><path d="M0.7,0.8 L6.25,6.3 L11.8,0.8" fill="none" stroke="#7f7f7f" stroke-width="1.8"/></svg>

<svg style="left:64.2px;top:626.25px" width="25" height="24" viewBox="0 0 25 24" preserveAspectRatio="none"> <path d="M12.5,0.9 L24,6.6 L24,17.4 L12.5,23.1 L1,17.4 L1,6.6 Z" fill="#fbe7a6" stroke="#e3b960" stroke-width="1.5" stroke-linejoin="round"/>
 <path d="M12.5,12.2 L23.2,7 L23.2,17 L12.5,22.2 Z" fill="#f7c956"/>
 <path d="M12.5,2 L22.6,6.8 L12.5,11.8 L2.4,6.8 Z" fill="url(#gpk1)"/>
 <path d="M8.6,3.6 L12.5,5.6 L16.6,3.8 L12.5,2 Z" fill="#fffdf0"/>
 <path d="M12.5,5.6 L12.5,11.8" stroke="#f3d184" stroke-width="1"/>
 <path d="M12.5,2.2 L22.8,7 L22.8,16.9 L12.5,22 L2.2,16.9 L2.2,7 Z" fill="none" stroke="#fff6d8" stroke-width=".9" opacity=".9"/></svg>

<div class="st ui" style="left:106.3px;top:626.90px;">MPR.DLL</div>
<svg style="left:73.5px;top:656.3px" width="7.5" height="12.5"><path d="M0.8,0.7 L6.3,6.25 L0.8,11.8" fill="none" stroke="#7f7f7f" stroke-width="1.8"/></svg>

<div class="a" style="left:103.2px;top:649.40px;font-family:'DejaVu Sans',sans-serif;font-weight:normal;font-size:17.8px;line-height:24px;color:#ff00ff;-webkit-text-stroke:.7px #ff00ff;text-shadow:-0.8px 0.8px 0 #8a008a">ƒ</div>
<div class="a" style="left:109.4px;top:662.40px;font-family:'Liberation Sans',sans-serif;font-weight:bold;font-size:9.5px;line-height:10px;color:#d800d8">x</div>
<div class="sb b" style="left:137.6px;top:651.35px;">WNetAddConnection4W</div>
<svg style="left:73.5px;top:680.75px" width="7.5" height="12.5"><path d="M0.8,0.7 L6.3,6.25 L0.8,11.8" fill="none" stroke="#7f7f7f" stroke-width="1.8"/></svg>

<div class="a" style="left:103.2px;top:673.85px;font-family:'DejaVu Sans',sans-serif;font-weight:normal;font-size:17.8px;line-height:24px;color:#ff00ff;-webkit-text-stroke:.7px #ff00ff;text-shadow:-0.8px 0.8px 0 #8a008a">ƒ</div>
<div class="a" style="left:109.4px;top:686.85px;font-family:'Liberation Sans',sans-serif;font-weight:bold;font-size:9.5px;line-height:10px;color:#d800d8">x</div>
<div class="sb b" style="left:137.6px;top:675.80px;">WNetCancelConnection2W</div>
<svg style="left:73.5px;top:705.1999999999999px" width="7.5" height="12.5"><path d="M0.8,0.7 L6.3,6.25 L0.8,11.8" fill="none" stroke="#7f7f7f" stroke-width="1.8"/></svg>

<div class="a" style="left:103.2px;top:698.30px;font-family:'DejaVu Sans',sans-serif;font-weight:normal;font-size:17.8px;line-height:24px;color:#ff00ff;-webkit-text-stroke:.7px #ff00ff;text-shadow:-0.8px 0.8px 0 #8a008a">ƒ</div>
<div class="a" style="left:109.4px;top:711.30px;font-family:'Liberation Sans',sans-serif;font-weight:bold;font-size:9.5px;line-height:10px;color:#d800d8">x</div>
<div class="sb b" style="left:137.6px;top:700.25px;">WNetCloseEnum</div>
<svg style="left:73.5px;top:729.65px" width="7.5" height="12.5"><path d="M0.8,0.7 L6.3,6.25 L0.8,11.8" fill="none" stroke="#7f7f7f" stroke-width="1.8"/></svg>

<div class="a" style="left:103.2px;top:722.75px;font-family:'DejaVu Sans',sans-serif;font-weight:normal;font-size:17.8px;line-height:24px;color:#ff00ff;-webkit-text-stroke:.7px #ff00ff;text-shadow:-0.8px 0.8px 0 #8a008a">ƒ</div>
<div class="a" style="left:109.4px;top:735.75px;font-family:'Liberation Sans',sans-serif;font-weight:bold;font-size:9.5px;line-height:10px;color:#d800d8">x</div>
<div class="sb b" style="left:137.6px;top:724.70px;">WNetEnumResourceW</div>
<svg style="left:73.5px;top:754.1px" width="7.5" height="12.5"><path d="M0.8,0.7 L6.3,6.25 L0.8,11.8" fill="none" stroke="#7f7f7f" stroke-width="1.8"/></svg>

<div class="a" style="left:103.2px;top:747.20px;font-family:'DejaVu Sans',sans-serif;font-weight:normal;font-size:17.8px;line-height:24px;color:#ff00ff;-webkit-text-stroke:.7px #ff00ff;text-shadow:-0.8px 0.8px 0 #8a008a">ƒ</div>
<div class="a" style="left:109.4px;top:760.20px;font-family:'Liberation Sans',sans-serif;font-weight:bold;font-size:9.5px;line-height:10px;color:#d800d8">x</div>
<div class="sb b" style="left:137.6px;top:749.15px;">WNetGetConnectionW</div>
<svg style="left:73.5px;top:778.55px" width="7.5" height="12.5"><path d="M0.8,0.7 L6.3,6.25 L0.8,11.8" fill="none" stroke="#7f7f7f" stroke-width="1.8"/></svg>

<div class="a" style="left:103.2px;top:771.65px;font-family:'DejaVu Sans',sans-serif;font-weight:normal;font-size:17.8px;line-height:24px;color:#ff00ff;-webkit-text-stroke:.7px #ff00ff;text-shadow:-0.8px 0.8px 0 #8a008a">ƒ</div>
<div class="a" style="left:109.4px;top:784.65px;font-family:'Liberation Sans',sans-serif;font-weight:bold;font-size:9.5px;line-height:10px;color:#d800d8">x</div>
<div class="sb b" style="left:137.6px;top:773.60px;">WNetGetLastErrorW</div>
<svg style="left:69.8px;top:805.8px" width="12.5" height="7.5"><path d="M0.7,0.8 L6.25,6.3 L11.8,0.8" fill="none" stroke="#7f7f7f" stroke-width="1.8"/></svg>

<div class="a" style="left:103.2px;top:796.10px;font-family:'DejaVu Sans',sans-serif;font-weight:normal;font-size:17.8px;line-height:24px;color:#ff00ff;-webkit-text-stroke:.7px #ff00ff;text-shadow:-0.8px 0.8px 0 #8a008a">ƒ</div>
<div class="a" style="left:109.4px;top:809.10px;font-family:'Liberation Sans',sans-serif;font-weight:bold;font-size:9.5px;line-height:10px;color:#d800d8">x</div>
<div class="sb b" style="left:137.6px;top:798.05px;">WNetOpenEnumW</div>
<div class="a" style="left:126.3px;top:820.65px;font-family:'Liberation Sans',sans-serif;font-weight:bold;font-size:19.8px;line-height:24px;color:#ff00ff;-webkit-text-stroke:.5px #ff00ff;transform:scaleX(.7);transform-origin:0 0">P</div>
<svg style="left:136px;top:824.85px" width="14.4" height="17"><path d="M7,0.3 L14.2,7 L7,13 L0.2,7 Z" fill="#00f000"/><path d="M0.2,7 L7,13 L7,16.8 L0.2,10.4 Z" fill="#0aa0a8"/><path d="M14.2,7 L7,13 L7,16.8 L14.2,10.6 Z" fill="#000"/></svg>
<div class="sb b" style="left:168.3px;top:822.50px;color:#000">lpNetResource</div>
<svg style="left:39px;top:855.5px" width="12.5" height="7.5"><path d="M0.7,0.8 L6.25,6.3 L11.8,0.8" fill="none" stroke="#7f7f7f" stroke-width="1.8"/></svg>

<svg style="left:64.2px;top:846.3px" width="25" height="24" viewBox="0 0 25 24" preserveAspectRatio="none"> <path d="M12.5,0.9 L24,6.6 L24,17.4 L12.5,23.1 L1,17.4 L1,6.6 Z" fill="#fbe7a6" stroke="#e3b960" stroke-width="1.5" stroke-linejoin="round"/>
 <path d="M12.5,12.2 L23.2,7 L23.2,17 L12.5,22.2 Z" fill="#f7c956"/>
 <path d="M12.5,2 L22.6,6.8 L12.5,11.8 L2.4,6.8 Z" fill="url(#gpk1)"/>
 <path d="M8.6,3.6 L12.5,5.6 L16.6,3.8 L12.5,2 Z" fill="#fffdf0"/>
 <path d="M12.5,5.6 L12.5,11.8" stroke="#f3d184" stroke-width="1"/>
 <path d="M12.5,2.2 L22.8,7 L22.8,16.9 L12.5,22 L2.2,16.9 L2.2,7 Z" fill="none" stroke="#fff6d8" stroke-width=".9" opacity=".9"/></svg>

<div class="sb b" style="left:107.6px;top:846.95px;color:#000;letter-spacing:0">NETUTILS.DLL</div>
<svg style="left:73.5px;top:876.35px" width="7.5" height="12.5"><path d="M0.8,0.7 L6.3,6.25 L0.8,11.8" fill="none" stroke="#7f7f7f" stroke-width="1.8"/></svg>

<div class="a" style="left:103.2px;top:869.45px;font-family:'DejaVu Sans',sans-serif;font-weight:normal;font-size:17.8px;line-height:24px;color:#ff00ff;-webkit-text-stroke:.7px #ff00ff;text-shadow:-0.8px 0.8px 0 #8a008a">ƒ</div>
<div class="a" style="left:109.4px;top:882.45px;font-family:'Liberation Sans',sans-serif;font-weight:bold;font-size:9.5px;line-height:10px;color:#d800d8">x</div>
<div class="sb b" style="left:137.6px;top:871.40px;">NetApiBufferAllocate</div>
<div class="a w" style="left:502px;top:41px;width:522px;height:3.2px"></div>
<div class="a w" style="left:502.2px;top:41px;width:2.5px;height:839px"></div>
<div class="a" style="left:505px;top:44.2px;width:519px;height:2px;background:#8e8e8e"></div>
<div class="a" style="left:505px;top:44.2px;width:1.7px;height:36px;background:#8e8e8e"></div>
<div class="a" style="left:506.7px;top:46px;width:517.3px;height:34px;background:linear-gradient(90deg,#a9abaa 0,#a9abaa 250px,#e4e4e4 517px)"></div>
<div class="a w" style="left:506.7px;top:46px;width:517.3px;height:1.6px;opacity:.9"></div>
<div class="a w" style="left:506.7px;top:46px;width:1.6px;height:34px;opacity:.9"></div>
<div class="a" style="left:505px;top:79.4px;width:519px;height:1.5px;background:#868686"></div>
<svg style="left:512.2px;top:55px" width="19" height="16.5" viewBox="0 0 19 16.5"> <rect x="0.6" y="0.6" width="17.8" height="15.3" fill="#dfe9f3" stroke="#5a5a5a" stroke-width="1.2"/>
 <rect x="1.2" y="1.2" width="3.2" height="14.1" fill="#ececec"/>
 <path d="M2.8,1.6 V15" stroke="#222" stroke-width="1.6" stroke-dasharray="1.6 1.5"/>
 <rect x="4.6" y="9" width="13.2" height="6.3" fill="#d4efd8"/>
 <path d="M6.6,3.4 H16.4 M6.6,6.4 H16.4" stroke="#3c5a8c" stroke-width="1.7" stroke-dasharray="3.4 1.2"/>
 <path d="M4.8,8.4 H17.8" stroke="#2c3c5c" stroke-width="1.3"/>
 <path d="M5,12 H17.6" stroke="#fff" stroke-width="1.4"/></svg>

<div class="a ui t1" style="left:540px;top:46.5px">Listing:  net.exe</div>
<div class="a w" style="left:505px;top:83.6px;width:519px;height:2.2px"></div>
<div class="a" style="left:505px;top:85px;width:1.2px;height:27.6px;background:#777"></div>
<div class="a w" style="left:505px;top:112.6px;width:519px;height:2px"></div>
<div class="a w" style="left:631.6px;top:86px;width:1.4px;height:26.6px"></div>
<div class="a" style="left:633px;top:85px;width:1.6px;height:28px;background:#777"></div>
<div class="a ui" style="left:533.6px;top:85px;font-size:16.5px;line-height:30px">ccm.dll</div>
<div class="a" style="left:634.6px;top:81px;width:139.4px;height:35px;background:#2e4d7b"></div>
<div class="a" style="left:634.6px;top:81px;width:139.4px;height:1.3px;background:#5676a6"></div>
<div class="a" style="left:772.8px;top:81px;width:1.4px;height:34px;background:#1d3254"></div>
<div class="a ui" style="left:664.4px;top:85px;font-size:15.8px;line-height:30px;color:#fff;letter-spacing:-.1px">*net.exe</div>
<svg style="left:751.4px;top:91.4px" width="16" height="16"><path d="M3.4,3.4 L12.2,12.2 M12.2,3.4 L3.4,12.2" stroke="#1a1a1a" stroke-width="5.6" stroke-linecap="square"/><path d="M3.4,3.4 L12.2,12.2 M12.2,3.4 L3.4,12.2" stroke="#fff" stroke-width="3.2" stroke-linecap="square"/></svg>
<div class="a w" style="left:774px;top:83.6px;width:1.4px;height:29px"></div>
<div class="a" style="left:505px;top:114.6px;width:519px;height:4.4px;background:#2e4d7b"></div>
<div class="a w" style="left:529.6px;top:119px;width:107px;height:761px"></div>
<div class="a" style="left:516px;top:122.3px;width:4.4px;height:88.7px;background:#aaaaaa"></div>
<div class="a" style="left:515.6px;top:553.5px;width:5.2px;height:327px;background:#b2b2b2"></div>
<svg style="left:506.6px;top:776.4px" width="24" height="13"><path d="M0.4,6.4 H20" stroke="#000" stroke-width="1.5"/><path d="M16.6,1.2 L23.4,6.4 L16.6,11.6 Z" fill="#000"/></svg>
<div class="a w" style="left:644.6px;top:120.4px;width:380px;height:760px"></div>
<div class="a" style="left:642.6px;top:119px;width:2px;height:761px;background:#7c7c7c"></div>
<div class="a" style="left:642.6px;top:119px;width:382px;height:1.5px;background:#7c7c7c"></div>
<div class="a" style="left:645.6px;top:553.9px;width:379px;height:246.2px;background:#eff6fe"></div>
<div class="a" style="left:636px;top:637px;width:6.6px;height:14.4px;background:#262626"></div>
<div class="a" style="left:668.6px;top:652.5px;width:2.2px;height:23.5px;background:#f7a8bc"></div>
<div class="ln mono" style="left:643.7px;top:138.40px;"><span class="cb">30</span></div>
<div class="ln mono" style="left:714.6px;top:138.40px;"><span class="cn">ADD</span></div>
<div class="ln mono" style="left:836.6px;top:138.40px;"><span class="cr">RSP</span>,<span class="cg">0x30</span></div>
<div class="ln mono" style="left:714.6px;top:162.88px;"><span class="cn">POP</span></div>
<div class="ln mono" style="left:836.6px;top:162.88px;"><span class="cr">R15</span></div>
<div class="ln mono" style="left:714.6px;top:187.35px;"><span class="cn">RET</span></div>
<div class="ln mono" style="left:714.6px;top:211.83px;"><span class="cn">??</span></div>
<div class="ln mono" style="left:836.6px;top:211.83px;"><span class="cg">CCh</span></div>
<div class="ln mono" style="left:714.6px;top:236.30px;"><span class="cn">??</span></div>
<div class="ln mono" style="left:836.6px;top:236.30px;"><span class="cg">CCh</span></div>
<div class="ln mono" style="left:714.6px;top:260.78px;"><span class="cn">??</span></div>
<div class="ln mono" style="left:836.6px;top:260.78px;"><span class="cg">CCh</span></div>
<div class="ln mono" style="left:714.6px;top:285.25px;"><span class="cn">??</span></div>
<div class="ln mono" style="left:836.6px;top:285.25px;"><span class="cg">CCh</span></div>
<div class="ln mono" style="left:714.6px;top:309.73px;"><span class="cn">??</span></div>
<div class="ln mono" style="left:836.6px;top:309.73px;"><span class="cg">CCh</span></div>
<div class="ln mono" style="left:714.6px;top:334.20px;"><span class="cn">??</span></div>
<div class="ln mono" style="left:836.6px;top:334.20px;"><span class="cg">CCh</span></div>
<div class="ln mono" style="left:714.6px;top:358.68px;"><span class="cn">??</span></div>
<div class="ln mono" style="left:836.6px;top:358.68px;"><span class="cg">71h</span></div>
<div class="ln mono" style="left:911.2px;top:358.68px;"><span class="cg">q</span></div>
<div class="ln mono" style="left:714.6px;top:383.15px;"><span class="cn">??</span></div>
<div class="ln mono" style="left:836.6px;top:383.15px;"><span class="cg">30h</span></div>
<div class="ln mono" style="left:911.2px;top:383.15px;"><span class="cg">0</span></div>
<div class="ln mono" style="left:714.6px;top:407.63px;"><span class="cn">??</span></div>
<div class="ln mono" style="left:836.6px;top:407.63px;"><span class="cg">52h</span></div>
<div class="ln mono" style="left:911.2px;top:407.63px;"><span class="cg">R</span></div>
<div class="ln mono" style="left:714.6px;top:432.10px;"><span class="cn">??</span></div>
<div class="ln mono" style="left:836.6px;top:432.10px;"><span class="cg">5Eh</span></div>
<div class="ln mono" style="left:911.2px;top:432.10px;"><span class="cg">^</span></div>
<div class="ln mono" style="left:714.6px;top:456.58px;"><span class="cn">??</span></div>
<div class="ln mono" style="left:836.6px;top:456.58px;"><span class="cg">47h</span></div>
<div class="ln mono" style="left:911.2px;top:456.58px;"><span class="cg">G</span></div>
<div class="ln mono" style="left:714.6px;top:481.05px;"><span class="cn">??</span></div>
<div class="ln mono" style="left:836.6px;top:481.05px;"><span class="cg">27h</span></div>
<div class="ln mono" style="left:911.2px;top:481.05px;"><span class="cg">'</span></div>
<div class="ln mono" style="left:714.6px;top:505.52px;"><span class="cn">??</span></div>
<div class="ln mono" style="left:836.6px;top:505.52px;"><span class="cg">05h</span></div>
<div class="ln mono" style="left:714.6px;top:530.00px;"><span class="cn">??</span></div>
<div class="ln mono" style="left:836.6px;top:530.00px;"><span class="cg">D3h</span></div>
<div class="ln mono cs" style="left:667.6px;top:584.25px;font-size:22px;letter-spacing:-2.469px">****************************************</div>
<div class="ln mono cs" style="left:667.6px;top:608.73px;font-size:22px;letter-spacing:-2.469px">*</div>
<div class="ln mono" style="left:958.2px;top:603.43px;"><span class="cs">FUNCTION</span></div>
<div class="ln mono cs" style="left:667.6px;top:633.20px;font-size:22px;letter-spacing:-2.469px">****************************************</div>
<div class="ln mono" style="left:668.3px;top:652.38px;">undefined __fastcall <span class="cm">entry</span>(void)</div>
<div class="ln mono" style="left:700px;top:676.85px;"><span class="cr">assume GS_OFFSET = 0xff00000000</span></div>
<svg style="left:668.7px;top:697.4px" width="24.25" height="22.5" viewBox="0 0 24.25 22.5"> <path d="M12.1,1.4 L23.2,21 L1,21 Z" fill="url(#gwarn)" stroke="#e6a93a" stroke-width="1.7" stroke-linejoin="round"/>
 <path d="M12.1,4.6 L20.4,19.3 L3.8,19.3 Z" fill="none" stroke="#fff8dc" stroke-width="1" stroke-linejoin="round"/>
 <path d="M11,8.4 H13.3 L12.8,14.6 H11.5 Z" fill="#c08a2a"/>
 <rect x="11.1" y="15.8" width="2.1" height="2.1" rx=".6" fill="#c08a2a"/></svg>

<div class="ln mono" style="left:696.6px;top:701.33px;letter-spacing:-.1px"><span class="cx">&lt;UNASSIGNED&gt;</span></div>
<div class="ln mono" style="left:852.4px;top:701.33px;"><span class="ct">&lt;RETURN&gt;</span></div>
<div class="ln mono" style="left:667.8px;top:725.80px;"><span class="cm">entry</span></div>
<div class="ln mono" style="left:643.7px;top:774.75px;"><span class="cb">28</span></div>
<div class="ln mono" style="left:714.6px;top:774.75px;"><span class="cn">SUB</span></div>
<div class="ln mono" style="left:836.6px;top:774.75px;"><span class="cr">RSP</span>,<span class="cg">0x28</span></div>
<div class="ln mono" style="left:714.6px;top:799.23px;"><span class="cn">CALL</span></div>
<div class="ln mono" style="left:836.6px;top:799.23px;"><span class="cb">FUN_140003494</span></div>
<div class="ln mono" style="left:643.7px;top:848.18px;"><span class="cb">28</span></div>
<div class="ln mono" style="left:714.6px;top:848.18px;"><span class="cn">ADD</span></div>
<div class="ln mono" style="left:836.6px;top:848.18px;"><span class="cr">RSP</span>,<span class="cg">0x28</span></div>
<div class="ln mono" style="left:714.6px;top:872.65px;"><span class="cm">JMP</span></div>
<div class="ln mono" style="left:836.6px;top:872.65px;"><span class="cb">FUN_140003d90</span></div>
<svg style="left:0;top:0" width="1024" height="880">
<rect x="26.5" y="627.6" width="415.5" height="192.8" fill="none" stroke="#12ae12" stroke-width="3.2"/>
<path d="M718.6,309.1 L474.75,585.6" stroke="#06b106" stroke-width="7.4" fill="none"/>
<path d="M450,613.8 L460,573.8 L489.5,597.5 Z" fill="#06b106"/>
</svg>
</body></html>
